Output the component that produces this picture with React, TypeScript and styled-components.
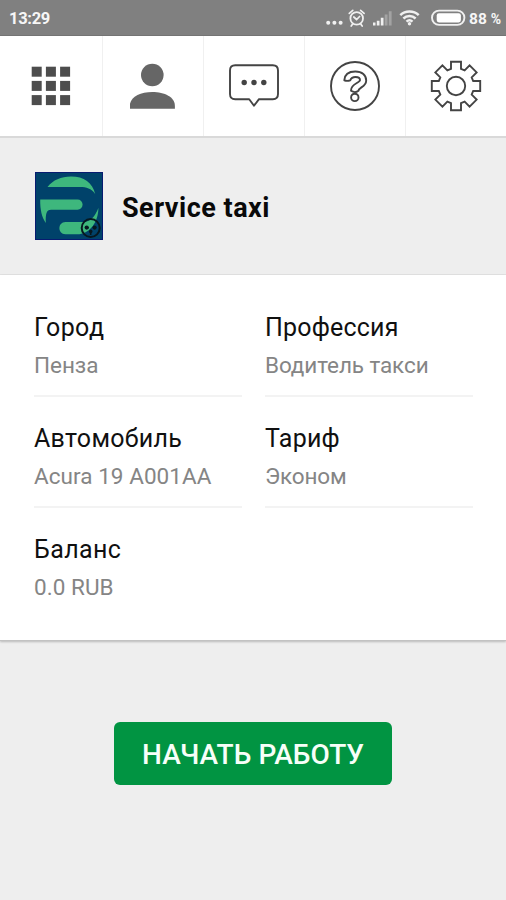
import React from "react";
import styled, { createGlobalStyle } from "styled-components";

const GlobalStyle = createGlobalStyle`
  * { box-sizing: border-box; }
  body { margin: 0; background: #eee; font-family: Roboto, "Noto Sans", sans-serif; }
`;

const Screen = styled.div`
  display: flex;
  flex-direction: column;
  width: 506px;
  height: 900px;
  overflow: hidden;
  background: #eee;
`;

const StatusBar = styled.header`
  display: flex;
  align-items: center;
  justify-content: space-between;
  flex: none;
  height: 36px;
  padding-left: 9px;
  color: #f6f6f6;
  background: #808080;
  border-bottom: 1px solid #747474;
`;

const Clock = styled.span`
  padding-top: 2px;
  font-size: 16.5px;
  font-weight: 700;
  line-height: 20px;
  letter-spacing: -0.3px;
`;

const StatusIcons = styled.div`
  display: flex;
  align-items: center;
  width: 182px;
  height: 35px;
`;

const Percent = styled.span`
  margin-left: -13px;
  padding-top: 2px;
  font-size: 15.5px;
  font-weight: 700;
  line-height: 20px;
  white-space: nowrap;
`;

const PercentSign = styled.span`
  margin-left: 4px;
  font-size: 14px;
`;

const Tabs = styled.nav`
  display: grid;
  grid-template-columns: 103px 101px 101px 101px 100px;
  flex: none;
  height: 102px;
  background: #fff;
  border-bottom: 2px solid #d9d9d9;
`;

const Tab = styled.button<{ $last?: boolean }>`
  display: flex;
  align-items: center;
  justify-content: center;
  padding: 0;
  border: 0;
  border-right: ${(p) => (p.$last ? "0" : "1px solid #f0f0f0")};
  background: none;
`;

const Service = styled.section`
  display: flex;
  align-items: center;
  gap: 19px;
  flex: none;
  height: 137px;
  padding: 0 35px;
  border-bottom: 1px solid #e2e2e2;
`;

const ServiceName = styled.h1`
  margin: 3px 0 0;
  color: #090909;
  font-size: 27px;
  font-weight: 700;
  line-height: 36px;
  letter-spacing: 0.5px;
`;

const Details = styled.section`
  display: grid;
  grid-template-columns: 208px 208px;
  grid-template-rows: 111px 111px 111px;
  column-gap: 23px;
  flex: none;
  height: 366px;
  padding: 11px 33px 0 34px;
  background: #fff;
  border-bottom: 1px solid #c2c2c2;
  box-shadow: 0 1px 2px rgba(0, 0, 0, 0.22);
`;

const Field = styled.div<{ $plain?: boolean }>`
  display: flex;
  flex-direction: column;
  padding-top: 25px;
  border-bottom: ${(p) => (p.$plain ? "0" : "2px solid #f3f3f3")};
`;

const Label = styled.span<{ $spacing: number }>`
  color: #101010;
  font-size: 25px;
  line-height: 34px;
  letter-spacing: ${(p) => p.$spacing}px;
  white-space: nowrap;
`;

const Value = styled.span<{ $spacing: number }>`
  margin-top: 3px;
  color: #858585;
  font-size: 22.5px;
  line-height: 34px;
  letter-spacing: ${(p) => p.$spacing}px;
  white-space: nowrap;
`;

const Actions = styled.div`
  display: flex;
  justify-content: center;
  padding-top: 81px;
`;

const StartButton = styled.button`
  width: 278px;
  height: 63px;
  padding: 2px 0 0;
  border: 0;
  border-radius: 6px;
  color: #f7fff9;
  background: #019442;
  font-family: inherit;
  font-size: 28px;
  font-weight: 500;
  letter-spacing: 0.05px;
  white-space: nowrap;
`;

const StatusGlyphs = () => (
  <svg width="158" height="35" viewBox="324 0 158 35" fill="none" stroke="#f0f0f0">
    <g fill="#f0f0f0" stroke="none">
      <circle cx="328.2" cy="22.8" r="2" />
      <circle cx="334.4" cy="22.8" r="2" />
      <circle cx="340.6" cy="22.8" r="2" />
      <path d="M373 22.5h2.5v3H373zM376.8 20.8h2.7v4.7h-2.7zM380.8 17.8h2.7v7.7h-2.7z" />
      <path d="M384.7 14.5h2.8v11h-2.8zM388.8 11.3h2.8v14.2h-2.8z" fill="#a3a3a3" />
    </g>
    <circle cx="356.7" cy="18.4" r="6.3" strokeWidth="1.8" />
    <path d="M353.8 17l2.8 2.5 3-3M349.3 13.4l3.5-3M364.1 13.4l-3.5-3M352.5 24.3l-1.3 1.8M360.9 24.3l1.3 1.8" strokeWidth="1.7" strokeLinecap="round" />
    <path d="M400.3 15.2c5-4.8 13.4-4.8 18.4 0M403.4 18.5c3.5-3.2 8.7-3.2 12.2 0M406.5 21.6c1.8-1.6 4.2-1.6 6 0" strokeWidth="2.5" />
    <circle cx="409.5" cy="23.7" r="1.7" fill="#f0f0f0" stroke="none" />
    <rect x="432" y="10.6" width="32.4" height="14.3" rx="7.1" strokeWidth="1.9" />
    <rect x="436.7" y="13.2" width="24.2" height="9.2" rx="2.3" fill="#fff" stroke="none" />
  </svg>
);

const GridIcon = () => (
  <svg width="40" height="40" viewBox="0 0 40 40" fill="#4d4d4d">
    {[0.7, 14.9, 29.1].map((y) =>
      [0.7, 14.9, 29.1].map((x) => <rect key={`${x}-${y}`} x={x} y={y} width="10" height="10" />)
    )}
  </svg>
);

const PersonIcon = () => (
  <svg width="46" height="46" viewBox="0 0 46 46" fill="#666">
    <circle cx="22.3" cy="12" r="11.3" />
    <path d="M-.2 45.8V43C-.2 34 10 29 22.3 29S44.9 34 44.9 43v2.8z" />
  </svg>
);

const ChatIcon = () => (
  <svg width="52" height="46" viewBox="0 0 52 46" fill="none" stroke="#444" strokeWidth="1.9">
    <path d="M7.2 2.2h37.6Q50 2.2 50 7.4V31Q50 36.2 44.8 36.2H31L26 42.7l-4.8-6.5h-14Q2 36.2 2 31V7.4Q2 2.2 7.2 2.2z" strokeLinejoin="round" />
    <g fill="#444" stroke="none">
      <circle cx="16.2" cy="19.5" r="2.7" />
      <circle cx="26" cy="19.5" r="2.7" />
      <circle cx="35.8" cy="19.5" r="2.7" />
    </g>
  </svg>
);

const HelpIcon = () => (
  <svg width="52" height="52" viewBox="-26 -26 52 52" fill="none" stroke="#444" strokeWidth="1.9">
    <circle r="24" />
    <path d="M-10.7-5.7C-10.4-11-6.6-14.5.3-14.5S11.2-10.8 11.2-5.6C11.2 1 3.5 1.3 3.5 4.8Q0 7.4-4 4.8C-4.4-2.6 5-2.8 5-6 5-8 3.4-9 .5-9S-4-7.8-4.8-5.7Q-7.8-4.6-10.7-5.7z" strokeLinejoin="round" />
    <circle cx="-.2" cy="11.4" r="3.7" />
  </svg>
);

const gearPath = (() => {
  const tooth = [[-5, -17.2], [-5, -24.2], [5, -24.2], [5, -17.2]];
  const points = Array.from({ length: 8 }, (_, i) => {
    const a = (i * Math.PI) / 4;
    return tooth.map(([x, y]) =>
      [x * Math.cos(a) - y * Math.sin(a), x * Math.sin(a) + y * Math.cos(a)].map((n) => n.toFixed(2)).join(" ")
    );
  }).flat();
  return `M${points.join("L")}Z`;
})();

const GearIcon = () => (
  <svg width="52" height="52" viewBox="-26 -26 52 52" fill="none" stroke="#444" strokeWidth="1.9">
    <path d={gearPath} />
    <circle r="9.2" />
  </svg>
);

const ServiceLogo = () => (
  <svg width="68" height="68" viewBox="0 0 68 68">
    <rect x=".5" y=".5" width="67" height="67" fill="#00426a" stroke="#071b70" />
    <g fill="#3eb77d">
      <path d="M12.5 15C18 8 26 4.5 36 4.5c13 0 21.5 6 24.2 17.5-4-5.5-8.8-7-15-7z" />
      <path d="M5.2 27.5h37.3a5 5 0 0 1 0 10.2H16c-4.7 0-5.4 4-5.2 13.3C7 45.5 5 38 5.2 27.5z" />
      <path d="M63.4 36C60 44.5 55.5 50 48 50H30.5c-8 0-8.2 12.2 0 12.2h14C55 61 63.4 50 63.4 36z" />
    </g>
    <g fill="none" stroke="#071820">
      <circle cx="55.7" cy="56" r="9" strokeWidth="2" />
      <path d="M50.5 54.8l3.2 1.2M61 54.8L57.8 56M55.7 59v4" strokeWidth="1.6" />
    </g>
    <g fill="#071820">
      <circle cx="51.7" cy="55.6" r="2.1" />
      <circle cx="59.6" cy="55.6" r="2.1" />
      <circle cx="55.7" cy="59.4" r="1.8" />
    </g>
  </svg>
);

const fields = [
  { label: "Город", value: "Пенза", ls: 0.4, vs: -0.05 },
  { label: "Профессия", value: "Водитель такси", ls: 0.2, vs: -0.1 },
  { label: "Автомобиль", value: "Acura 19 A001AA", ls: 0.3, vs: 0.05 },
  { label: "Тариф", value: "Эконом", ls: 0.25, vs: -0.15 },
  { label: "Баланс", value: "0.0 RUB", ls: 0.4, vs: 0.05, plain: true },
];

const tabs = [
  { name: "Меню", Icon: GridIcon },
  { name: "Профиль", Icon: PersonIcon },
  { name: "Сообщения", Icon: ChatIcon },
  { name: "Помощь", Icon: HelpIcon },
  { name: "Настройки", Icon: GearIcon },
];

export default function App() {
  return (
    <>
      <GlobalStyle />
      <Screen>
        <StatusBar>
          <Clock>13:29</Clock>
          <StatusIcons>
            <StatusGlyphs />
            <Percent>
              88<PercentSign>%</PercentSign>
            </Percent>
          </StatusIcons>
        </StatusBar>
        <Tabs>
          {tabs.map(({ name, Icon }, i) => (
            <Tab key={name} aria-label={name} $last={i === tabs.length - 1}>
              <Icon />
            </Tab>
          ))}
        </Tabs>
        <Service>
          <ServiceLogo />
          <ServiceName>Service taxi</ServiceName>
        </Service>
        <Details>
          {fields.map((f) => (
            <Field key={f.label} $plain={f.plain}>
              <Label $spacing={f.ls}>{f.label}</Label>
              <Value $spacing={f.vs}>{f.value}</Value>
            </Field>
          ))}
        </Details>
        <Actions>
          <StartButton>НАЧАТЬ РАБОТУ</StartButton>
        </Actions>
      </Screen>
    </>
  );
}
